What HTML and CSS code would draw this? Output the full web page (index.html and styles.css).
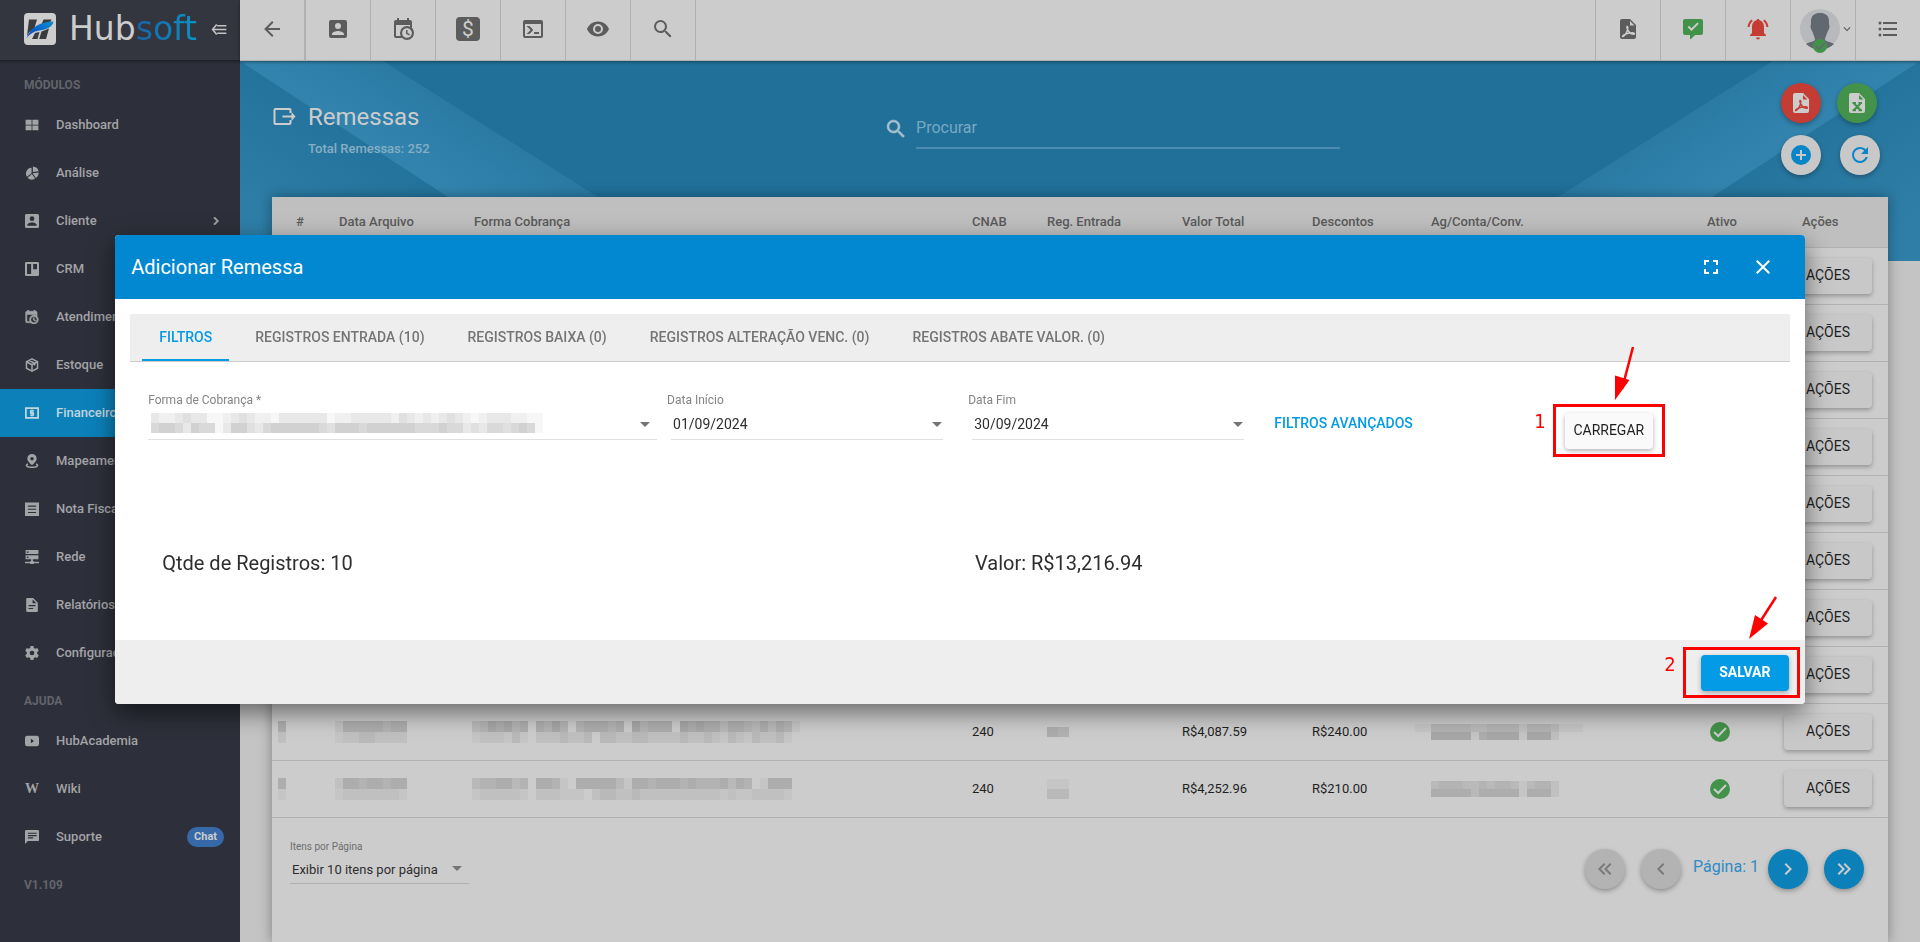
FILE: index.html
```html
<!DOCTYPE html>
<html lang="pt-BR">
<head>
<meta charset="utf-8">
<title>Hubsoft - Remessas</title>
<link rel="stylesheet" href="styles.css">
</head>
<body>
<svg class="sprite" aria-hidden="true">
  <symbol id="i-back" viewBox="0 0 24 24"><path d="M20,11V13H8L13.5,18.5L12.08,19.92L4.16,12L12.08,4.08L13.5,5.5L8,11H20Z"/></symbol>
  <symbol id="i-account" viewBox="0 0 24 24"><path d="M6,17C6,15 10,13.9 12,13.9C14,13.9 18,15 18,17V18H6M15,9A3,3 0 0,1 12,12A3,3 0 0,1 9,9A3,3 0 0,1 12,6A3,3 0 0,1 15,9M3,5V19A2,2 0 0,0 5,21H19A2,2 0 0,0 21,19V5A2,2 0 0,0 19,3H5C3.89,3 3,3.9 3,5Z"/></symbol>
  <symbol id="i-menu-account" viewBox="3 3 18 18"><path d="M6,17C6,15 10,13.9 12,13.9C14,13.9 18,15 18,17V18H6M15,9A3,3 0 0,1 12,12A3,3 0 0,1 9,9A3,3 0 0,1 12,6A3,3 0 0,1 15,9M3,5V19A2,2 0 0,0 5,21H19A2,2 0 0,0 21,19V5A2,2 0 0,0 19,3H5C3.89,3 3,3.9 3,5Z"/></symbol>
  <symbol id="i-calclock" viewBox="0 0 24 24"><path d="M15,13H16.5V15.82L18.94,17.23L18.19,18.53L15,16.69V13M19,8H5V19H9.67C9.24,18.09 9,17.07 9,16A7,7 0 0,1 16,9C17.07,9 18.09,9.24 19,9.67V8M5,21C3.89,21 3,20.1 3,19V5C3,3.89 3.89,3 5,3H6V1H8V3H16V1H18V3H19A2,2 0 0,1 21,5V11.1C22.24,12.36 23,14.09 23,16A7,7 0 0,1 16,23C14.09,23 12.36,22.24 11.1,21H5M16,11.15A4.85,4.85 0 0,0 11.15,16C11.15,18.68 13.32,20.85 16,20.85A4.85,4.85 0 0,0 20.85,16C20.85,13.32 18.68,11.15 16,11.15Z"/></symbol>
  <symbol id="i-menu-calclock" viewBox="3 1 20 22"><path stroke="currentColor" stroke-width="0.8" d="M15,13H16.5V15.82L18.94,17.23L18.19,18.53L15,16.69V13M19,8H5V19H9.67C9.24,18.09 9,17.07 9,16A7,7 0 0,1 16,9C17.07,9 18.09,9.24 19,9.67V8M5,21C3.89,21 3,20.1 3,19V5C3,3.89 3.89,3 5,3H6V1H8V3H16V1H18V3H19A2,2 0 0,1 21,5V11.1C22.24,12.36 23,14.09 23,16A7,7 0 0,1 16,23C14.09,23 12.36,22.24 11.1,21H5M16,11.15A4.85,4.85 0 0,0 11.15,16C11.15,18.68 13.32,20.85 16,20.85A4.85,4.85 0 0,0 20.85,16C20.85,13.32 18.68,11.15 16,11.15Z"/></symbol>
  <symbol id="i-console" viewBox="0 0 24 24"><path d="M20,19V7H4V19H20M20,3A2,2 0 0,1 22,5V19A2,2 0 0,1 20,21H4A2,2 0 0,1 2,19V5C2,3.89 2.9,3 4,3H20M13,17V15H18V17H13M9.58,13L5.57,9H8.4L11.7,12.3C12.09,12.69 12.09,13.33 11.7,13.72L8.42,17H5.59L9.58,13Z"/></symbol>
  <symbol id="i-eye" viewBox="0 0 24 24"><path d="M12,9A3,3 0 0,0 9,12A3,3 0 0,0 12,15A3,3 0 0,0 15,12A3,3 0 0,0 12,9M12,17A5,5 0 0,1 7,12A5,5 0 0,1 12,7A5,5 0 0,1 17,12A5,5 0 0,1 12,17M12,4.5C7,4.5 2.73,7.61 1,12C2.73,16.39 7,19.5 12,19.5C17,19.5 21.27,16.39 23,12C21.27,7.61 17,4.5 12,4.5Z"/></symbol>
  <symbol id="i-search" viewBox="0 0 24 24"><path d="M9.5,3A6.5,6.5 0 0,1 16,9.5C16,11.11 15.41,12.59 14.44,13.73L14.71,14H15.5L20.5,19L19,20.5L14,15.5V14.71L13.73,14.44C12.59,15.41 11.11,16 9.5,16A6.5,6.5 0 0,1 3,9.5A6.5,6.5 0 0,1 9.5,3M9.5,5C7,5 5,7 5,9.5C5,12 7,14 9.5,14C12,14 14,12 14,9.5C14,7 12,5 9.5,5Z"/></symbol>
  <symbol id="i-pdf" viewBox="0 0 24 24"><path fill-rule="evenodd" d="M6,2A2,2 0 0,0 4,4V20A2,2 0 0,0 6,22H18A2,2 0 0,0 20,20V8L14,2ZM14,4V8.500H18.500Z"/><path class="cut" d="M7,19.500C9,18.500 12,14.500 11.800,10.500C11.700,8.800 10.500,9.200 11,11C12,14.500 14.500,17 17.500,17.200C19,17.200 18.500,15.600 16,15.700C13,15.800 9.500,16.600 7.300,18.300C6.500,19 6.400,19.800 7,19.500"/></symbol>
  <symbol id="i-excel" viewBox="0 0 24 24"><path fill-rule="evenodd" d="M6,2A2,2 0 0,0 4,4V20A2,2 0 0,0 6,22H18A2,2 0 0,0 20,20V8L14,2ZM14,4V8.500H18.500Z"/><path class="cut thick" d="M9,12.500L15.500,19M15.500,12.500L9,19M7.500,12H11M13.500,12H17M7.500,19.200H11M13.500,19.200H17"/></symbol>
  <symbol id="i-msgcheck" viewBox="0 0 24 24"><path fill-rule="evenodd" d="M4,2H20A2,2 0 0,1 22,4V16A2,2 0 0,1 20,18H14L10,22H9V18H4A2,2 0 0,1 2,16V4A2,2 0 0,1 4,2M17.800,6.800L16.400,5.400L10.500,11.300L8,8.800L6.600,10.200L10.500,14.100Z"/></symbol>
  <symbol id="i-bell" viewBox="0 0 24 24"><path d="M12,2A1.500,1.500 0 0,0 10.500,3.300C7.800,4 6,6.300 6,9.500V16L4,18V19H20V18L18,16V9.500C18,6.300 16.200,4 13.500,3.300A1.500,1.500 0 0,0 12,2M10,20.500A2,2 0 0,0 14,20.500ZM5.500,2.500L6.900,3.900C4.800,5.500 3.800,7.600 3.600,10H1.600C1.800,7 3.200,4.300 5.500,2.500M18.500,2.500L17.100,3.900C19.200,5.500 20.200,7.600 20.400,10H22.400C22.200,7 20.800,4.300 18.500,2.500"/></symbol>
  <symbol id="i-list" viewBox="0 0 24 24"><path d="M7,5H21V7H7V5M7,13V11H21V13H7M4,4.500A1.500,1.500 0 0,1 5.500,6A1.500,1.500 0 0,1 4,7.500A1.500,1.500 0 0,1 2.500,6A1.500,1.500 0 0,1 4,4.500M4,10.500A1.500,1.500 0 0,1 5.500,12A1.500,1.500 0 0,1 4,13.500A1.500,1.500 0 0,1 2.500,12A1.500,1.500 0 0,1 4,10.500M7,19V17H21V19H7M4,16.500A1.500,1.500 0 0,1 5.500,18A1.500,1.500 0 0,1 4,19.500A1.500,1.500 0 0,1 2.500,18A1.500,1.500 0 0,1 4,16.500Z"/></symbol>
  <symbol id="i-tiles" viewBox="0 0 24 24"><path d="M1,3H11.300V11.500H1ZM12.700,3H23V11.500H12.700ZM1,12.700H11.300V21H1ZM12.700,12.700H23V21H12.700Z"/></symbol>
  <symbol id="i-pie" viewBox="0 0 24 24"><path d="M13.500,0.800A11,11 0 0,1 23.500,9L13.500,10.300ZM11.300,3V12.500L3.300,18.500A10,10 0 0,1 11.300,3ZM13,12.500L23.500,11.200A10,10 0 0,1 18.500,20.500ZM11.800,13.800L17.300,21.400A10,10 0 0,1 4.300,20Z"/></symbol>
  <symbol id="i-board" viewBox="0 0 24 24"><path fill-rule="evenodd" d="M2,0H22A2,2 0 0,1 24,2V22A2,2 0 0,1 22,24H2A2,2 0 0,1 0,22V2A2,2 0 0,1 2,0M3.500,3.500V20.500H10.500V3.500ZM14,3.500V12.500H20.500V3.500Z"/></symbol>
  <symbol id="i-box" viewBox="0 0 24 24"><path fill="none" stroke="currentColor" stroke-width="2.600" stroke-linejoin="round" d="M12,1.500L21.500,6.500V17.500L12,22.500L2.500,17.500V6.500ZM2.500,6.500L12,11.500L21.500,6.500M12,11.500V22.500M7,4L16.500,9V13"/></symbol>
  <symbol id="i-money" viewBox="0 0 24 24"><path fill="none" stroke="currentColor" stroke-width="3" d="M1.500,3.500H22.500V20.500H1.500Z"/><path fill="none" stroke="currentColor" stroke-width="2.200" d="M15.500,8.300H9.500V12H14.500V15.800H8.500M12,6V18"/></symbol>
  <symbol id="i-map" viewBox="0 0 24 24"><path fill-rule="evenodd" d="M12,0A8,8 0 0,1 20,8C20,13 12,19 12,19C12,19 4,13 4,8A8,8 0 0,1 12,0M12,5A3,3 0 1,0 12,11A3,3 0 1,0 12,5"/><path fill="none" stroke="currentColor" stroke-width="2.600" d="M5,17C-1,20 5,22.800 12,22.800C19,22.800 25,20 19,17"/></symbol>
  <symbol id="i-note" viewBox="0 0 24 24"><path fill-rule="evenodd" d="M0,1H24V24H0ZM5,6V8H19V6ZM5,11.500V13.500H19V11.500ZM5,17V19H19V17Z"/></symbol>
  <symbol id="i-net" viewBox="0 0 24 24"><path fill-rule="evenodd" d="M1,0H23V7H1ZM3,2.500V4.500H6V2.500ZM1,9H23V16H1ZM3,11.500V13.500H6V11.500ZM10.500,16H13.500V19H15V20H24V22.500H15V24H9V22.500H0V20H9V19H10.500Z"/></symbol>
  <symbol id="i-doc" viewBox="0 0 24 24"><path fill-rule="evenodd" d="M4,0H14L22,8V22A2,2 0 0,1 20,24H4A2,2 0 0,1 2,22V2A2,2 0 0,1 4,0M13,2.500V9H19.500ZM6,12V14H18V12ZM6,17V19H14V17Z"/></symbol>
  <symbol id="i-gear" viewBox="0 0 24 24"><path fill-rule="evenodd" d="M9.500,0H14.500L15.200,3.400L17.600,4.800L21,3.600L23.600,8L21,10.400V13.600L23.600,16L21,20.400L17.600,19.200L15.200,20.600L14.500,24H9.500L8.800,20.600L6.400,19.200L3,20.400L0.400,16L3,13.600V10.400L0.400,8L3,3.600L6.400,4.800L8.800,3.400ZM12,8A4,4 0 1,0 12,16A4,4 0 1,0 12,8"/></symbol>
  <symbol id="i-video" viewBox="0 0 24 24"><path fill-rule="evenodd" d="M4,3H20A4,4 0 0,1 24,7V17A4,4 0 0,1 20,21H4A4,4 0 0,1 0,17V7A4,4 0 0,1 4,3M10,8V16L15.500,12Z"/></symbol>
  <symbol id="i-msg" viewBox="0 0 24 24"><path fill-rule="evenodd" d="M2,0H22A2,2 0 0,1 24,2V17A2,2 0 0,1 22,19H5L0,24V2A2,2 0 0,1 2,0M5,4.500V6.500H20V4.500ZM5,8.500V10.500H20V8.500ZM5,12.500V14.500H14V12.500Z"/></symbol>
  <symbol id="i-right" viewBox="0 0 24 24"><path d="M8.590,16.580L13.170,12L8.590,7.410L10,6L16,12L10,18Z"/></symbol>
  <symbol id="i-left" viewBox="0 0 24 24"><path d="M15.410,16.580L10.830,12L15.410,7.410L14,6L8,12L14,18Z"/></symbol>
  <symbol id="i-first" viewBox="0 0 24 24"><path d="M18.410,7.410L17,6L11,12L17,18L18.410,16.590L13.830,12L18.410,7.410M12.410,7.410L11,6L5,12L11,18L12.410,16.590L7.830,12L12.410,7.410Z"/></symbol>
  <symbol id="i-last" viewBox="0 0 24 24"><path d="M5.590,7.410L7,6L13,12L7,18L5.590,16.590L10.170,12L5.590,7.410M11.590,7.410L13,6L19,12L13,18L11.590,16.590L16.170,12L11.590,7.410Z"/></symbol>
  <symbol id="i-down" viewBox="0 0 24 24"><path d="M7.410,8.580L12,13.170L16.590,8.580L18,10L12,16L6,10Z"/></symbol>
  <symbol id="i-plus" viewBox="0 0 24 24"><path d="M17,13H13V17H11V13H7V11H11V7H13V11H17M12,2A10,10 0 0,0 2,12A10,10 0 0,0 12,22A10,10 0 0,0 22,12A10,10 0 0,0 12,2Z"/></symbol>
  <symbol id="i-refresh" viewBox="0 0 24 24"><path d="M17.650,6.350C16.200,4.900 14.210,4 12,4A8,8 0 0,0 4,12A8,8 0 0,0 12,20C15.730,20 18.840,17.450 19.730,14H17.650C16.830,16.330 14.610,18 12,18A6,6 0 0,1 6,12A6,6 0 0,1 12,6C13.660,6 15.140,6.690 16.220,7.780L13,11H20V4L17.650,6.350Z"/></symbol>
  <symbol id="i-full" viewBox="0 0 24 24"><path d="M5,5H10V7H7V10H5V5M14,5H19V10H17V7H14V5M17,14H19V19H14V17H17V14M10,17V19H5V14H7V17H10Z"/></symbol>
  <symbol id="i-close" viewBox="0 0 24 24"><path d="M19,6.410L17.590,5L12,10.590L6.410,5L5,6.410L10.590,12L5,17.590L6.410,19L12,13.410L17.590,19L19,17.590L13.410,12L19,6.410Z"/></symbol>
  <symbol id="i-ok" viewBox="0 0 24 24"><path d="M12,2A10,10 0 1,0 12,22A10,10 0 1,0 12,2"/><path class="cut thick" d="M6,12L10.200,16L18,8"/></symbol>
</svg>

<div class="app">
  <aside class="sidebar">
    <div class="brand">
      <svg class="brand-mark" viewBox="0 0 32 32" aria-hidden="true">
        <defs><linearGradient id="swoosh" x1="0" y1="1" x2="1" y2="0"><stop offset="0" stop-color="#0a3fc4"/><stop offset="1" stop-color="#0a8fd0"/></linearGradient></defs>
        <rect width="32" height="32" rx="4" fill="#cdcdcd"/>
        <path fill="#3a3b3e" d="M5,6.500H13L10.500,15L5,19.500L3,23ZM19.500,6.500H27.500L26.800,8.500L17.500,11.500ZM11,20L15.500,19L13.500,26H8ZM17.500,18.500L25,15.500L22,26H15.200Z"/>
        <path fill="url(#swoosh)" d="M2.500,25.500C6,15 16,8.500 29.500,8.500C29,14 22,16.500 15.500,17.500C9,18.500 5,21.500 2.500,25.500Z"/>
      </svg>
      <span class="brand-name">Hub<span class="brand-soft">soft</span></span>
      <button class="collapse" aria-label="Recolher menu"><svg viewBox="0 0 16 12" aria-hidden="true"><path fill="none" stroke="currentColor" stroke-width="1.700" d="M5.500,0.500L1,6L5.500,11.500M2,6H16M6,2H16M6,10H16"/></svg></button>
    </div>
    <nav class="menu">
      <h2>MÓDULOS</h2>
      <a href="#"><svg class="ic"><use href="#i-tiles"/></svg>Dashboard</a>
      <a href="#"><svg class="ic"><use href="#i-pie"/></svg>Análise</a>
      <a href="#"><svg class="ic"><use href="#i-menu-account"/></svg>Cliente<svg class="more"><use href="#i-right"/></svg></a>
      <a href="#"><svg class="ic"><use href="#i-board"/></svg>CRM</a>
      <a href="#"><svg class="ic"><use href="#i-menu-calclock"/></svg>Atendimento</a>
      <a href="#"><svg class="ic"><use href="#i-box"/></svg>Estoque</a>
      <a href="#" class="active"><svg class="ic"><use href="#i-money"/></svg>Financeiro</a>
      <a href="#"><svg class="ic"><use href="#i-map"/></svg>Mapeamento</a>
      <a href="#"><svg class="ic"><use href="#i-note"/></svg>Nota Fiscal</a>
      <a href="#"><svg class="ic"><use href="#i-net"/></svg>Rede</a>
      <a href="#"><svg class="ic"><use href="#i-doc"/></svg>Relatórios</a>
      <a href="#"><svg class="ic"><use href="#i-gear"/></svg>Configuração</a>
      <h2>AJUDA</h2>
      <a href="#"><svg class="ic"><use href="#i-video"/></svg>HubAcademia</a>
      <a href="#"><span class="ic wiki" aria-hidden="true">W</span>Wiki</a>
      <a href="#"><svg class="ic"><use href="#i-msg"/></svg>Suporte<span class="chat">Chat</span></a>
      <h2>V1.109</h2>
    </nav>
  </aside>

  <div class="main">
    <header class="topbar">
      <button class="tb sep" aria-label="Voltar"><svg><use href="#i-back"/></svg></button>
      <button class="tb" aria-label="Clientes"><svg><use href="#i-account"/></svg></button>
      <button class="tb" aria-label="Agenda"><svg><use href="#i-calclock"/></svg></button>
      <button class="tb" aria-label="Financeiro"><span class="dollar">$</span></button>
      <button class="tb" aria-label="Console"><svg><use href="#i-console"/></svg></button>
      <button class="tb" aria-label="Visualizar"><svg><use href="#i-eye"/></svg></button>
      <button class="tb" aria-label="Buscar"><svg><use href="#i-search"/></svg></button>
      <span class="spacer"></span>
      <button class="tb right" aria-label="PDF"><svg><use href="#i-pdf"/></svg></button>
      <button class="tb right green" aria-label="Mensagens"><svg><use href="#i-msgcheck"/></svg></button>
      <button class="tb right red" aria-label="Alertas"><svg><use href="#i-bell"/></svg></button>
      <button class="tb right user" aria-label="Usuário">
        <svg class="avatar" viewBox="0 0 40 44"><circle cx="20" cy="20" r="20" fill="#b7b9bd"/><path fill="#626870" d="M20,4C26,4 29.500,7 29,14L29.500,18C29,21 27.500,22 27,24C26,28 25,28 25,31C27,33 31,33 34,35A20,20 0 0,1 6,35C9,33 13,33 15,31C15,28 14,28 13,24C12.500,22 11,21 10.500,18L11,14C10.500,7 14,4 20,4Z"/><circle cx="20" cy="37" r="7" fill="#43924a"/><path fill="none" stroke="#626870" stroke-width="1.600" d="M15.500,37L19,40L25,34"/></svg>
        <svg class="caret"><use href="#i-down"/></svg>
      </button>
      <button class="tb right" aria-label="Menu"><svg><use href="#i-list"/></svg></button>
    </header>

    <div class="content">
      <svg class="banner" viewBox="0 0 1680 200" preserveAspectRatio="none" aria-hidden="true">
        <defs>
          <linearGradient id="bl" gradientUnits="userSpaceOnUse" x1="0" y1="0" x2="-70" y2="107"><stop offset="0" stop-color="#24739c"/><stop offset="1" stop-color="#2e7ea8"/></linearGradient>
          <linearGradient id="br" gradientUnits="userSpaceOnUse" x1="1680" y1="0" x2="1750" y2="107"><stop offset="0" stop-color="#25749d"/><stop offset="1" stop-color="#2e7ea8"/></linearGradient>
          <linearGradient id="ml" gradientUnits="userSpaceOnUse" x1="143" y1="0" x2="104" y2="61"><stop offset="0" stop-color="#2a7aa4"/><stop offset="1" stop-color="#3284ae"/></linearGradient>
          <linearGradient id="mr" gradientUnits="userSpaceOnUse" x1="1533" y1="0" x2="1572" y2="61"><stop offset="0" stop-color="#2a7aa4"/><stop offset="1" stop-color="#3284ae"/></linearGradient>
        </defs>
        <rect width="1680" height="200" fill="#20709a"/>
        <path fill="url(#ml)" d="M0,0H143L459,200H0Z"/>
        <path fill="url(#bl)" d="M0,0L306,200H0Z"/>
        <path fill="url(#mr)" d="M1680,0H1533L1217,200H1680Z"/>
        <path fill="url(#br)" d="M1680,0L1374,200H1680Z"/>
      </svg>
      <div class="page-head">
        <div class="title">
          <svg class="title-ic" viewBox="0 0 22 17" aria-hidden="true"><path fill="none" stroke="currentColor" stroke-width="2" d="M17,5V2Q17,1 16,1H2Q1,1 1,2V15Q1,16 2,16H16Q17,16 17,15V12"/><path fill="currentColor" d="M9,7.500H18V4L22,8.500L18,13V9.500H9Z"/></svg>
          <div><h1>Remessas</h1><p>Total Remessas: 252</p></div>
        </div>
        <label class="search"><svg><use href="#i-search"/></svg><input type="text" placeholder="Procurar" aria-label="Procurar"></label>
        <div class="actions">
          <div class="pair"><button class="fab f-red" aria-label="Exportar PDF"><svg><use href="#i-pdf"/></svg></button><button class="fab f-green" aria-label="Exportar Excel"><svg><use href="#i-excel"/></svg></button></div>
          <div class="pair wide"><button class="fab f-light" aria-label="Adicionar"><svg><use href="#i-plus"/></svg></button><button class="fab f-light" aria-label="Atualizar"><svg><use href="#i-refresh"/></svg></button></div>
        </div>
      </div>

      <section class="card">
        <table>
          <colgroup><col class="c-id"><col class="c-date"><col><col class="c-cnab"><col class="c-reg"><col class="c-val"><col class="c-desc"><col class="c-ag"><col class="c-on"><col class="c-act"></colgroup>
          <thead><tr><th>#</th><th>Data Arquivo</th><th>Forma Cobrança</th><th>CNAB</th><th>Reg. Entrada</th><th>Valor Total</th><th>Descontos</th><th>Ag/Conta/Conv.</th><th class="on">Ativo</th><th class="act-h">Ações</th></tr></thead>
          <tbody>
            <tr><td></td><td></td><td></td><td></td><td></td><td></td><td></td><td></td><td></td><td class="act"><button>AÇÕES</button></td></tr>
            <tr><td></td><td></td><td></td><td></td><td></td><td></td><td></td><td></td><td></td><td class="act"><button>AÇÕES</button></td></tr>
            <tr><td></td><td></td><td></td><td></td><td></td><td></td><td></td><td></td><td></td><td class="act"><button>AÇÕES</button></td></tr>
            <tr><td></td><td></td><td></td><td></td><td></td><td></td><td></td><td></td><td></td><td class="act"><button>AÇÕES</button></td></tr>
            <tr><td></td><td></td><td></td><td></td><td></td><td></td><td></td><td></td><td></td><td class="act"><button>AÇÕES</button></td></tr>
            <tr><td></td><td></td><td></td><td></td><td></td><td></td><td></td><td></td><td></td><td class="act"><button>AÇÕES</button></td></tr>
            <tr><td></td><td></td><td></td><td></td><td></td><td></td><td></td><td></td><td></td><td class="act"><button>AÇÕES</button></td></tr>
            <tr><td></td><td></td><td></td><td></td><td></td><td></td><td></td><td></td><td></td><td class="act"><button>AÇÕES</button></td></tr>
            <tr>
              <td class="m-id"><span class="mosaic" data-rows="5|2"></span></td>
              <td class="m-date"><span class="mosaic" data-rows="255555455|122332222"></span></td>
              <td class="m-form"><span class="mosaic" data-rows="34656450546404555450645550656553554353541|12221310222322303322332222322321321322310"></span></td>
              <td>240</td>
              <td><span class="mosaic wide" data-rows="54"></span></td>
              <td>R$4,087.59</td><td>R$240.00</td>
              <td class="m-ag"><span class="mosaic low" data-rows="114444433444424443111|006666615666616662000"></span></td>
              <td class="on"><svg class="ok" aria-label="Ativo"><use href="#i-ok"/></svg></td>
              <td class="act"><button>AÇÕES</button></td>
            </tr>
            <tr>
              <td class="m-id"><span class="mosaic" data-rows="5|1"></span></td>
              <td class="m-date"><span class="mosaic" data-rows="255455455|122222221"></span></td>
              <td class="m-form"><span class="mosaic" data-rows="3445534055410555553155455545444535401555|1222221022211102332232222222222121122221"></span></td>
              <td>240</td>
              <td><span class="mosaic wide" data-rows="11|33"></span></td>
              <td>R$4,252.96</td><td>R$210.00</td>
              <td class="m-ag"><span class="mosaic low" data-rows="003444334344313442|005555535555515552"></span></td>
              <td class="on"><svg class="ok" aria-label="Ativo"><use href="#i-ok"/></svg></td>
              <td class="act"><button>AÇÕES</button></td>
            </tr>
          </tbody>
        </table>
        <footer class="pager">
          <div class="per-page"><label for="pp">Itens por Página</label><div class="pick"><select id="pp"><option>Exibir 10 itens por página</option></select></div></div>
          <div class="pages">
            <button class="fab f-off" aria-label="Primeira" disabled><svg><use href="#i-first"/></svg></button>
            <button class="fab f-off" aria-label="Anterior" disabled><svg><use href="#i-left"/></svg></button>
            <span>Página: 1</span>
            <button class="fab f-blue" aria-label="Próxima"><svg><use href="#i-right"/></svg></button>
            <button class="fab f-blue" aria-label="Última"><svg><use href="#i-last"/></svg></button>
          </div>
        </footer>
      </section>
    </div>
  </div>
</div>

<div class="overlay">
  <div class="dialog" role="dialog" aria-labelledby="dlg-title">
    <header class="dlg-head">
      <h2 id="dlg-title">Adicionar Remessa</h2>
      <button aria-label="Tela cheia"><svg><use href="#i-full"/></svg></button>
      <button aria-label="Fechar"><svg><use href="#i-close"/></svg></button>
    </header>
    <div class="dlg-body">
      <div class="tabs" role="tablist">
        <button role="tab" aria-selected="true">FILTROS</button>
        <button role="tab" aria-selected="false">REGISTROS ENTRADA (10)</button>
        <button role="tab" aria-selected="false">REGISTROS BAIXA (0)</button>
        <button role="tab" aria-selected="false">REGISTROS ALTERAÇÃO VENC. (0)</button>
        <button role="tab" aria-selected="false">REGISTROS ABATE VALOR. (0)</button>
      </div>
      <form class="filters">
        <div class="field big"><label for="fc">Forma de Cobrança *</label><div class="pick"><select id="fc"><option></option></select><span class="mosaic cover" data-rows="3223433112343221333333122333332432323432123332211|5665365513664356666665466656666665556553435545651"></span></div></div>
        <div class="field date"><label for="di">Data Início</label><div class="pick"><select id="di"><option>01/09/2024</option></select></div></div>
        <div class="field date"><label for="df">Data Fim</label><div class="pick"><select id="df"><option>30/09/2024</option></select></div></div>
        <a class="advanced" href="#">FILTROS AVANÇADOS</a>
        <div class="step load">
          <button type="button" class="raised">CARREGAR</button>
          <span class="mark">1</span>
          <svg class="arrow" viewBox="0 0 32 60" aria-hidden="true"><path stroke="#f00" stroke-width="2.500" d="M24,3L13,45"/><path fill="#f00" d="M6,56V31.500L20.500,36Z"/></svg>
        </div>
      </form>
      <div class="totals"><span>Qtde de Registros: 10</span><span>Valor: R$13,216.94</span></div>
    </div>
    <footer class="dlg-foot">
      <div class="step save">
        <button type="button" class="raised primary">SALVAR</button>
        <span class="mark">2</span>
        <svg class="arrow" viewBox="0 0 36 50" aria-hidden="true"><path stroke="#f00" stroke-width="2.500" d="M30,3L12,31"/><path fill="#f00" d="M3,45L9,21L22,29.500Z"/></svg>
      </div>
    </footer>
  </div>
</div>
<script src="mosaic.js"></script>
</body>
</html>
```
FILE: styles.css
```css
* { box-sizing: border-box; }
body { margin: 0; font-family: Roboto, "Liberation Sans", sans-serif; color: #1f1f1f; font-size: 13px; overflow: hidden; }
button { font: inherit; color: inherit; border: 0; background: none; padding: 0; cursor: pointer; }
svg { fill: currentColor; display: block; flex: none; }
a { text-decoration: none; color: inherit; }
.sprite { position: absolute; width: 0; height: 0; }
.cut { fill: none; stroke: var(--cut, #ccc); stroke-width: 1.5; }
.cut.thick { stroke-width: 2; }

.app { display: flex; min-height: 100vh; background: #c4c4c4; }

.sidebar { width: 240px; flex: none; background: #2d2f3a; color: #a3a4a7; }
.brand { height: 61px; padding: 0 13px 2px 24px; display: flex; align-items: center; background: #33353f; border-bottom: 1px solid #212229; box-shadow: 0 1px 3px rgba(0,0,0,.3); }
.brand-mark { width: 32px; height: 32px; }
.brand-name { font: 33px/40px "DejaVu Sans", sans-serif; color: #ccc; margin-left: 13px; flex: 1; }
.brand-soft { color: transparent; background: linear-gradient(90deg, #1b62a5, #0a94c4); -webkit-background-clip: text; background-clip: text; }
.collapse { color: #c4c4c4; }
.collapse svg { width: 16px; height: 11px; }
.menu h2 { margin: 0; height: 40px; padding: 8px 24px 0; font-size: 12px; line-height: 32px; font-weight: 700; color: #62646b; }
.menu a { display: flex; align-items: center; height: 48px; padding: 0 16px 1px 25px; font-weight: 500; white-space: nowrap; }
.menu .ic { width: 14px; height: 14px; margin-right: 17px; }
.menu .wiki { font: 700 14px/14px "Liberation Serif", serif; }
.menu .active { background: #0b80b9; color: #c4d5df; }
.menu .more { width: 16px; height: 16px; margin-left: auto; stroke: currentColor; }
.chat { margin-left: auto; background: #3769a9; color: #ccc; border-radius: 10px; font: 700 11px/20px Roboto, sans-serif; padding: 0 7px; }

.main { flex: 1; min-width: 0; display: flex; flex-direction: column; }
.topbar { height: 61px; display: flex; background: #ccc; color: #5c5c5c; border-bottom: 1px solid #b0b0b0; box-shadow: 0 1px 3px rgba(0,0,0,.4); position: relative; z-index: 1; }
.tb { width: 65px; border-right: 1px solid #b0b0b0; display: flex; align-items: center; justify-content: center; padding-bottom: 2px; }
.tb.sep { width: 66px; border-right-width: 2px; }
.tb.right { border-right: 0; border-left: 1px solid #b0b0b0; }
.tb.user { padding-left: 8px; }
.tb svg { width: 24px; height: 24px; }
.spacer { flex: 1; }
.dollar { width: 24px; height: 24px; border-radius: 4px; background: #5c5c5c; color: #ccc; font-size: 21px; line-height: 24px; }
.green { color: #43924a; }
.red { color: #c43c33; }
.tb .avatar { width: 40px; height: 44px; margin-top: 4px; }
.tb .caret { width: 14px; height: 14px; }

.content { flex: 1; position: relative; padding: 0 32px; display: flex; flex-direction: column; }
.banner { position: absolute; top: 0; left: 0; width: 100%; height: 200px; }
.page-head { position: relative; height: 136px; display: flex; color: #ccc; }
.title { width: 38%; display: flex; gap: 12px; padding: 38px 0 0 1px; }
.title-ic { width: 23px; height: 17px; margin-top: 9px; }
.title h1 { margin: 0; font-size: 24px; line-height: 36px; font-weight: 400; }
.title p { margin: 4px 0 0; line-height: 20px; font-weight: 500; color: #86aec4; }
.search { width: 28%; display: flex; align-items: center; height: 40px; margin: 48px 0 0 1px; }
.search svg { width: 24px; height: 24px; margin: 0 8px 0 -3px; color: #a8c0ce; stroke: currentColor; stroke-width: 0.5; }
.search input { flex: 1; min-width: 0; height: 40px; border: 0; border-bottom: 2px solid #4c8baf; background: none; font: 16px Roboto, sans-serif; padding: 0 0 2px; color: #ccc; outline: 0; }
.search input::placeholder { color: #79a9c2; opacity: 1; }
.actions { margin-left: auto; width: 107px; padding-top: 22px; display: flex; flex-direction: column; gap: 12px; }
.pair { display: flex; gap: 16px; }
.pair.wide { gap: 19px; }
.fab { width: 40px; height: 40px; border-radius: 50%; display: flex; align-items: center; justify-content: center; box-shadow: 0 2px 5px rgba(0,0,0,.3); }
.fab svg { width: 24px; height: 24px; }
.f-red { background: #c43c33; color: #ccc; --cut: #c43c33; }
.f-green { background: #43924a; color: #ccc; --cut: #43924a; }
.f-light { background: #c8c8c8; color: #0a86c8; }
.f-off { background: #b3b3b3; color: #7a7a7a; }
.f-blue { background: #0b80b9; color: #ccc; }

.card { position: relative; flex: 1; background: #ccc; box-shadow: 0 0 12px rgba(0,0,0,.35); }
table { width: 100%; table-layout: fixed; border-collapse: separate; border-spacing: 0; }
.c-id { width: 67px; } .c-date { width: 135px; } .c-cnab { width: 75px; } .c-reg { width: 135px; } .c-val { width: 130px; }
.c-desc { width: 119px; } .c-ag { width: 241px; } .c-on { width: 96px; } .c-act { width: 120px; }
th, td { padding: 0 0 1px; text-align: left; border-bottom: 1px solid #b2b2b2; }
th { height: 51px; padding-bottom: 2px; background: #bfbfbf; color: #5a5a5a; font-weight: 500; }
td { height: 57px; }
th:first-child { padding-left: 24px; }
.on { text-align: center; }
th.on { padding-left: 4px; }
th.act-h { padding-left: 34px; }
.act { text-align: center; padding-bottom: 0; }
.act button { width: 88px; height: 36px; padding-bottom: 2px; border-radius: 4px; background: #c8c8c8; font-size: 14px; box-shadow: 0 2px 4px rgba(0,0,0,.28); }
.ok { width: 24px; height: 24px; margin: 0 auto; color: #43924a; }

.mosaic { display: grid; width: max-content; }
.mosaic i { width: 8px; height: 11px; }
.mosaic.wide i { width: 11px; height: 10px; }
.mosaic.low i { height: 8px; }
.m-id { padding-left: 6px; }
.m-date .mosaic { margin-left: -4px; }
.m-form .mosaic { margin-left: -2px; }
.m-ag .mosaic { margin-left: -16px; }

.pager { display: flex; justify-content: space-between; padding: 22px 24px 0 18px; }
.per-page { width: 179px; }
.per-page label { display: block; font-size: 10px; line-height: 14px; color: #6d6d6d; }
.pick { position: relative; }
.pick select { appearance: none; width: 100%; border: 0; background: none; font: inherit; color: #2e2e2e; padding: 0 2px 1px; height: 30px; border-bottom: 1px solid #e0e0e0; border-radius: 0; outline: 0; display: block; }
.pick::after { content: ""; position: absolute; right: 7px; top: 12px; border: 5px solid transparent; border-top-color: #757575; border-bottom: 0; }
.per-page .pick select { border-color: #b0b0b0; padding: 2px 2px 0; }
.pages { display: flex; align-items: center; gap: 16px; height: 58px; }
.pages span { font-size: 16px; color: #2f8bc4; margin: 0 -7px 6px -4px; }

.overlay { position: fixed; inset: 0; display: flex; align-items: center; justify-content: center; padding-bottom: 3px; z-index: 5; }
.dialog { width: 88%; background: #fff; border-radius: 4px; box-shadow: 0 8px 24px rgba(0,0,0,.5); }
.dlg-head { height: 64px; background: #0288d1; color: #fff; display: flex; align-items: center; gap: 28px; padding: 0 30px 0 16px; border-radius: 4px 4px 0 0; }
.dlg-head h2 { margin: 0; font-size: 20px; font-weight: 400; flex: 1; }
.dlg-head svg { width: 24px; height: 24px; }
.dlg-body { padding: 15px 15px 65px; }
.tabs { display: flex; gap: 9px; padding-left: 12px; background: #eee; border-bottom: 1px solid #ccc; }
.tabs button { height: 47px; padding: 0 17px; font-size: 14px; font-weight: 500; color: #757575; border-bottom: 2px solid transparent; }
.tabs button[aria-selected="true"] { color: #039be5; border-color: #039be5; }
.filters { display: flex; align-items: flex-start; padding: 30px 0 0 18px; }
.field label { display: block; font-size: 12px; line-height: 16px; color: #848484; }
.field .pick { font-size: 14px; margin-top: 2px; }
.field.big { width: 31%; margin-right: 10px; }
.field.date { width: 17%; padding-right: 3px; margin-right: 22px; }
.field.date .pick { margin-left: 4px; }
.field.date .pick::after { right: 1px; }
.mosaic.cover { position: absolute; left: 3px; top: 3px; }
.mosaic.cover i { height: 10px; }
.advanced { color: #039be5; font-size: 14px; font-weight: 500; line-height: 20px; margin: 21px auto 0 5px; }
.step { position: relative; border: 3px solid #f00; display: flex; }
.raised { width: 88px; height: 36px; border-radius: 4px; background: #fafafa; font-size: 14px; box-shadow: 0 2px 5px rgba(0,0,0,.3); padding-bottom: 2px; }
.primary { background: #039be5; color: #fff; font-weight: 700; }
.load { margin: 12px 125px 1px 0; padding: 6px 9px 5px; }
.save { padding: 5px 8px 4px 15px; }
.mark { position: absolute; color: #f00; font: 20px/24px "DejaVu Sans Condensed", "DejaVu Sans", sans-serif; right: 100%; margin-right: 10px; top: 2px; }
.arrow { position: absolute; fill: none; }
.load .arrow { width: 32px; height: 60px; left: 53px; top: -63px; }
.save .arrow { width: 36px; height: 50px; left: 60px; top: -56px; }
.totals { display: grid; grid-template-columns: 1fr 1fr; padding: 93px 2px 0 32px; font-size: 20px; line-height: 24px; color: #2e2e2e; }
.dlg-foot { height: 64px; background: #eee; display: flex; justify-content: flex-end; align-items: center; padding: 0 5px 0 0; border-radius: 0 0 4px 4px; }
```
FILE: mosaic.js
```js
// Draws redacted values as a grid of grey cells; each digit is a cell's darkness.
document.querySelectorAll('.mosaic').forEach(function (box) {
  var rows = box.dataset.rows.split('|');
  var cols = Math.max.apply(null, rows.map(function (r) { return r.length; }));
  box.style.gridTemplateColumns = 'repeat(' + cols + ', auto)';
  rows.forEach(function (row) {
    row.padEnd(cols, '0').split('').forEach(function (d) {
      var cell = document.createElement('i');
      cell.style.background = 'rgba(0,0,0,' + (Number(d) * 0.03) + ')';
      box.appendChild(cell);
    });
  });
});
```
